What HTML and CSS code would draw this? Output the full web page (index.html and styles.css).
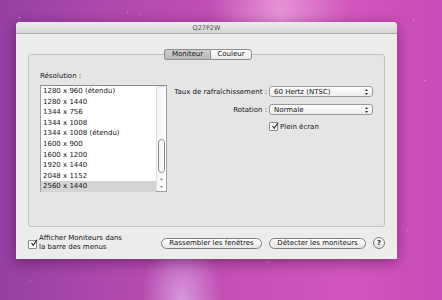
FILE: index.html
```html
<!DOCTYPE html>
<html lang="fr">
<head>
    <meta charset="UTF-8">
    <title>Q27P2W</title>
    <link rel="stylesheet" href="styles.css">
</head>
<body>

<div class="desktop">
    <div class="window">
        <div class="titlebar">Q27P2W</div>

        <div class="group">
            <div class="tabs">
                <span class="tab active">Moniteur</span>
                <span class="tab">Couleur</span>
            </div>

            <div class="res-label">Résolution :</div>

            <div class="panel">
                <div class="list">
                    <div class="rows">
                        <div class="row">1280 x 960 (étendu)</div>
                        <div class="row">1280 x 1440</div>
                        <div class="row">1344 x 756</div>
                        <div class="row">1344 x 1008</div>
                        <div class="row">1344 x 1008 (étendu)</div>
                        <div class="row">1600 x 900</div>
                        <div class="row">1600 x 1200</div>
                        <div class="row">1920 x 1440</div>
                        <div class="row">2048 x 1152</div>
                        <div class="row selected">2560 x 1440</div>
                    </div>
                    <div class="scrollbar">
                        <div class="track">
                            <div class="thumb"></div>
                        </div>
                        <div class="arrows">
                            <svg width="7" height="16" viewBox="0 0 7 16">
                                <path d="M2 5 L3.5 3 L5 5 Z" fill="#8a8a8a"/>
                                <path d="M2 11 L3.5 13 L5 11 Z" fill="#8a8a8a"/>
                            </svg>
                        </div>
                    </div>
                </div>

                <div class="settings">
                    <span class="label">Taux de rafraîchissement :</span>
                    <div class="popup"><span>60 Hertz (NTSC)</span><svg width="5" height="8" viewBox="0 0 5 8"><path d="M1 3 L2.5 1 L4 3 Z M1 5 L2.5 7 L4 5 Z" fill="#333"/></svg></div>

                    <span class="label">Rotation :</span>
                    <div class="popup"><span>Normale</span><svg width="5" height="8" viewBox="0 0 5 8"><path d="M1 3 L2.5 1 L4 3 Z M1 5 L2.5 7 L4 5 Z" fill="#333"/></svg></div>

                    <span></span>
                    <label class="check">
                        <span class="box"><svg width="8" height="8" viewBox="0 0 8 8"><path d="M1.5 4 L3.2 6.3 L7 0.8" fill="none" stroke="#222" stroke-width="1.1"/></svg></span>
                        Plein écran
                    </label>
                </div>
            </div>
        </div>

        <div class="footer">
            <label class="check menu-check">
                <span class="box"><svg width="8" height="8" viewBox="0 0 8 8"><path d="M1.5 4 L3.2 6.3 L7 0.8" fill="none" stroke="#222" stroke-width="1.1"/></svg></span>
                <span>Afficher Moniteurs dans<br>la barre des menus</span>
            </label>
            <div class="buttons">
                <button class="btn btn-gather">Rassembler les fenêtres</button>
                <button class="btn btn-detect">Détecter les moniteurs</button>
                <button class="help">?</button>
            </div>
        </div>
    </div>
</div>

</body>
</html>
```

FILE: styles.css
```css
:root { --win: #ececec; --group: #e5e5e5; --line: #c2c2c2; --text: #141414; }

body { margin: 0; font-family: 'DejaVu Sans', sans-serif; font-size: 7px; color: var(--text); }

/* --- Desktop --- */
.desktop { width: 442px; height: 300px; overflow: hidden; position: relative; padding-top: 22px; box-sizing: border-box;
    background:
        radial-gradient(ellipse 70px 120px at 280px 15px, rgba(240,170,225,0.75), rgba(240,170,225,0) 100%),
        radial-gradient(ellipse 40px 70px at 182px 300px, rgba(220,170,232,0.8), rgba(220,170,232,0) 100%),
        linear-gradient(90deg, #9540a2 0%, #b049ad 25%, #c650b6 55%, #d256bd 80%, #c84bb7 100%); }
.desktop::before { content: ""; position: absolute; top: 0; left: 0; width: 1px; height: 1px; border-radius: 50%;
    box-shadow: 19px 17px 0 rgba(255,255,255,0.7), 127px 12px 0 rgba(255,255,255,0.6), 140px 14px 0 rgba(255,255,255,0.5),
        413px 20px 0 rgba(255,255,255,0.6), 424px 80px 0 rgba(255,255,255,0.5), 407px 230px 0 rgba(255,255,255,0.5),
        268px 262px 0 rgba(255,255,255,0.5), 413px 285px 0 rgba(255,255,255,0.4), 30px 280px 0 rgba(255,255,255,0.4); }

/* --- Window --- */
.window { width: 381px; height: 237px; margin-left: 16px; background: var(--win); border-radius: 4px 4px 0 0; box-shadow: 0 3px 14px rgba(40,0,40,0.45); display: flex; flex-direction: column; }

.titlebar { height: 12px; line-height: 12px; text-align: center; color: #4d4d4d; font-size: 6.5px; border-radius: 4px 4px 0 0; background: linear-gradient(#ececec, #d4d4d4); border-bottom: 1px solid #a9a9a9; box-sizing: border-box; }

/* --- Group box --- */
.group { margin: 20px 12px 0; height: 173px; box-sizing: border-box; border: 1px solid var(--line); border-radius: 3px; background: var(--group); padding: 0 11px; }

.tabs { display: flex; justify-content: center; margin-top: -6px; margin-left: 3px; }
.tab { height: 11px; line-height: 9px; box-sizing: border-box; padding: 0 5px; border: 1px solid #8d8d8d; background: linear-gradient(#ffffff, #e9e9e9); }
.tab.active { border-radius: 3px 0 0 3px; border-right: none; background: linear-gradient(#cfcfcf, #b9b9b9); width: 46px; text-align: center; }
.tab:last-child { border-radius: 0 3px 3px 0; width: 42px; text-align: center; }

.res-label { margin-top: 12px; line-height: 9px; }

.panel { display: flex; margin-top: 4px; }

/* --- Resolution list --- */
.list { width: 128px; height: 107px; box-sizing: border-box; border: 1px solid #9f9f9f; border-top-color: #8a8a8a; background: #fff; display: flex; }
.rows { flex: 1; }
.row { height: 10.6px; line-height: 10.6px; padding-left: 2px; }
.row.selected { background: #d4d4d4; }

.scrollbar { width: 9px; display: flex; flex-direction: column; border-left: 1px solid #e0e0e0; background: linear-gradient(90deg, #f4f4f4, #ffffff); }
.track { flex: 1; display: flex; flex-direction: column; justify-content: flex-end; padding: 2px 0 2px; border-top: 1px solid #ddd; border-radius: 4px 4px 0 0; }
.thumb { height: 32px; margin: 0 1px; border: 1px solid #8a8a8a; border-radius: 4px; background: linear-gradient(90deg, #f2f2f2, #ffffff); }
.arrows { height: 16px; display: flex; justify-content: center; }

/* --- Settings --- */
.settings { display: grid; grid-template-columns: 98px 104px; column-gap: 2px; row-gap: 7px; align-items: center; align-content: start; margin-left: 2px; margin-top: 1px; }
.label { justify-self: end; white-space: nowrap; }
.popup { height: 11px; box-sizing: border-box; border: 1px solid #9a9a9a; border-radius: 3px; background: linear-gradient(#ffffff, #ececec); display: flex; align-items: center; justify-content: space-between; padding: 0 3px 0 4px; }

.check { display: flex; align-items: center; gap: 2px; }
.box { width: 7px; height: 7px; border: 1px solid #8a8a8a; border-radius: 1px; background: #fff; display: flex; align-items: center; justify-content: center; overflow: visible; }
.box svg { margin: -2px -2px 0 0; }

/* --- Footer --- */
.footer { flex: 1; display: flex; align-items: center; padding: 0 12px; }
.menu-check { line-height: 9px; gap: 2px; }
.menu-check .box { margin-top: 2px; }

.buttons { margin-left: auto; display: flex; align-items: center; gap: 7px; }
.btn { height: 11px; padding: 0; font: inherit; color: var(--text); border: 1px solid #7e7e7e; border-radius: 6px; background: linear-gradient(#ffffff, #e6e6e6); }
.btn-gather { width: 101px; }
.btn-detect { width: 97px; }
.help { width: 12px; height: 12px; padding: 0; border-radius: 50%; border: 1px solid #7a7a7a; background: linear-gradient(#ffffff, #e2e2e2); font: bold 7px 'DejaVu Sans', sans-serif; color: #333; line-height: 10px; }
```
